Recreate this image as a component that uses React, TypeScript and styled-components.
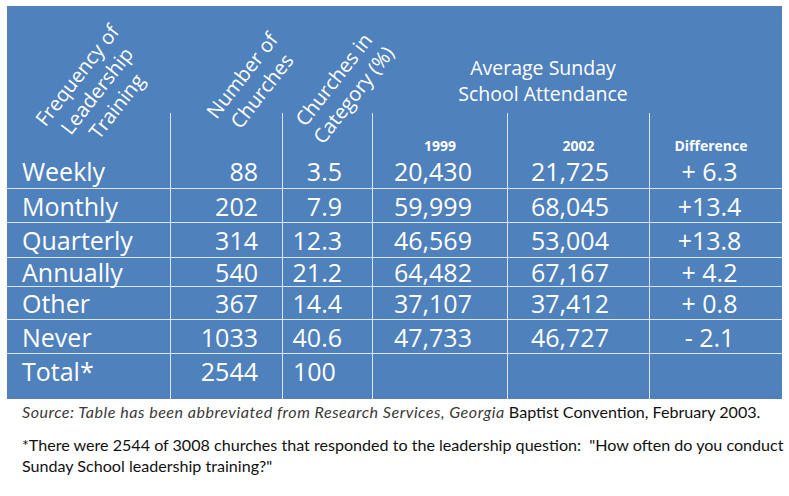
import React from "react";
import styled, { createGlobalStyle } from "styled-components";

const Global = createGlobalStyle`
  html, body { margin: 0; padding: 0; background: #ffffff; }
  body { width: 789px; height: 496px; overflow: hidden; }
`;

const RULE = "1px solid rgba(255, 255, 255, 0.8)";

const Page = styled.div`
  padding: 6px 0 0 7px;
  font-family: "Open Sans", "Noto Sans", sans-serif;
`;

const Table = styled.div`
  display: grid;
  width: 775px;
  grid-template-columns: 163px 112px 90px 135px 142px 133px;
  grid-template-rows: 107px 75px 34px 35px 29px 33px 34px 46px;
  background: #4f81bd;
  color: #ffffff;
`;

const RotCell = styled.div`
  display: flex;
  align-items: center;
  justify-content: center;
  min-width: 0;
  position: relative;
  z-index: 1;
`;

const RotText = styled.div<{ $dx: number; $dy: number }>`
  flex: none;
  white-space: nowrap;
  text-align: center;
  font-size: 20px;
  line-height: 25px;
  transform: translate(${(p) => p.$dx}px, ${(p) => p.$dy}px) rotate(-52deg);
`;

const GroupHead = styled.div`
  grid-column: 4 / span 3;
  display: flex;
  flex-direction: column;
  justify-content: flex-end;
  align-items: center;
  padding: 0 68px 5px 0;
  font-size: 19.5px;
  line-height: 26.6px;
  text-align: center;
`;

const Cell = styled.div<{ $divider: boolean; $rule: boolean; $place: "center" | "end" | "start" }>`
  display: flex;
  flex-direction: column;
  justify-content: ${(p) => (p.$place === "center" ? "center" : p.$place === "end" ? "flex-end" : "flex-start")};
  border-left: ${(p) => (p.$divider ? RULE : "none")};
  border-top: ${(p) => (p.$rule ? RULE : "none")};
  padding-bottom: ${(p) => (p.$place === "end" ? "2px" : "0")};
  min-width: 0;
`;

const SubLabel = styled.div<{ $pr: number }>`
  font-size: 14px;
  font-weight: 700;
  line-height: 20px;
  text-align: center;
  padding-right: ${(p) => p.$pr}px;
`;

const Value = styled.div<{ $align: "left" | "right" | "center"; $pl: number; $pr: number; $lh: number }>`
  font-size: 25px;
  line-height: ${(p) => p.$lh}px;
  white-space: pre;
  text-align: ${(p) => p.$align};
  padding-left: ${(p) => p.$pl}px;
  padding-right: ${(p) => p.$pr}px;
`;

const Notes = styled.div`
  padding: 2px 0 0 15px;
  font-family: Lato, "Liberation Sans", sans-serif;
  font-size: 16.1px;
  color: #111111;
`;

const Note = styled.p<{ $gap: number }>`
  margin: ${(p) => p.$gap}px 0 0 0;
  line-height: 21px;
  white-space: nowrap;
`;

const Ital = styled.span`
  font-style: italic;
  color: #3a3a3a;
  letter-spacing: 0.5px;
`;

type Align = "left" | "right" | "center";
const colFmt: { align: Align; pl: number; pr: number }[] = [
  { align: "left", pl: 15, pr: 0 },
  { align: "right", pl: 0, pr: 24 },
  { align: "right", pl: 0, pr: 30 },
  { align: "left", pl: 21, pr: 0 },
  { align: "left", pl: 23, pr: 0 },
  { align: "center", pl: 0, pr: 13 },
];

const rows: string[][] = [
  ["Weekly", "88", "3.5", "20,430", "21,725", "+ 6.3"],
  ["Monthly", "202", "7.9", "59,999", "68,045", "+13.4"],
  ["Quarterly", "314", "12.3", "46,569", "53,004", "+13.8"],
  ["Annually", "540", "21.2", "64,482", "67,167", "+ 4.2"],
  ["Other", "367", "14.4", "37,107", "37,412", "+ 0.8"],
  ["Never", "1033", "40.6", "47,733", "46,727", "- 2.1"],
  ["Total*", "2544", "100", "", "", ""],
];

const subLabels = ["", "", "", "1999", "2002", "Difference"];

export default function App() {
  return (
    <>
      <Global />
      <Page>
        <Table>
          <RotCell>
            <RotText $dx={8} $dy={31}>
              Frequency of
              <br />
              Leadership
              <br />
              Training
            </RotText>
          </RotCell>
          <RotCell>
            <RotText $dx={26} $dy={23}>
              Number of
              <br />
              Churches
            </RotText>
          </RotCell>
          <RotCell>
            <RotText $dx={16} $dy={27}>
              Churches in
              <br />
              Category (%)
            </RotText>
          </RotCell>
          <GroupHead>
            <div>Average Sunday</div>
            <div>School Attendance</div>
          </GroupHead>

          {rows.map((row, ri) =>
            row.map((v, ci) => {
              const first = ri === 0;
              const last = ri === rows.length - 1;
              const fmt =
                last && ci === 2 ? { align: "left" as Align, pl: 10, pr: 0 } : colFmt[ci];
              return (
                <Cell
                  key={`${ri}-${ci}`}
                  $divider={ci > 0}
                  $rule={ri > 0}
                  $place={first ? "end" : last ? "start" : "center"}
                >
                  {first && subLabels[ci] !== "" && (
                    <SubLabel $pr={ci === 5 ? 10 : 0}>{subLabels[ci]}</SubLabel>
                  )}
                  <Value $align={fmt.align} $pl={fmt.pl} $pr={fmt.pr} $lh={first ? 30 : 34}>
                    {v}
                  </Value>
                </Cell>
              );
            })
          )}
        </Table>
        <Notes>
          <Note $gap={0}>
            <Ital>Source: Table has been abbreviated from Research Services, Georgia</Ital> Baptist
            Convention, February 2003.
          </Note>
          <Note $gap={12}>
            *There were 2544 of 3008 churches that responded to the leadership question:
            &nbsp;"How often do you conduct
            <br />
            Sunday School leadership training?"
          </Note>
        </Notes>
      </Page>
    </>
  );
}
